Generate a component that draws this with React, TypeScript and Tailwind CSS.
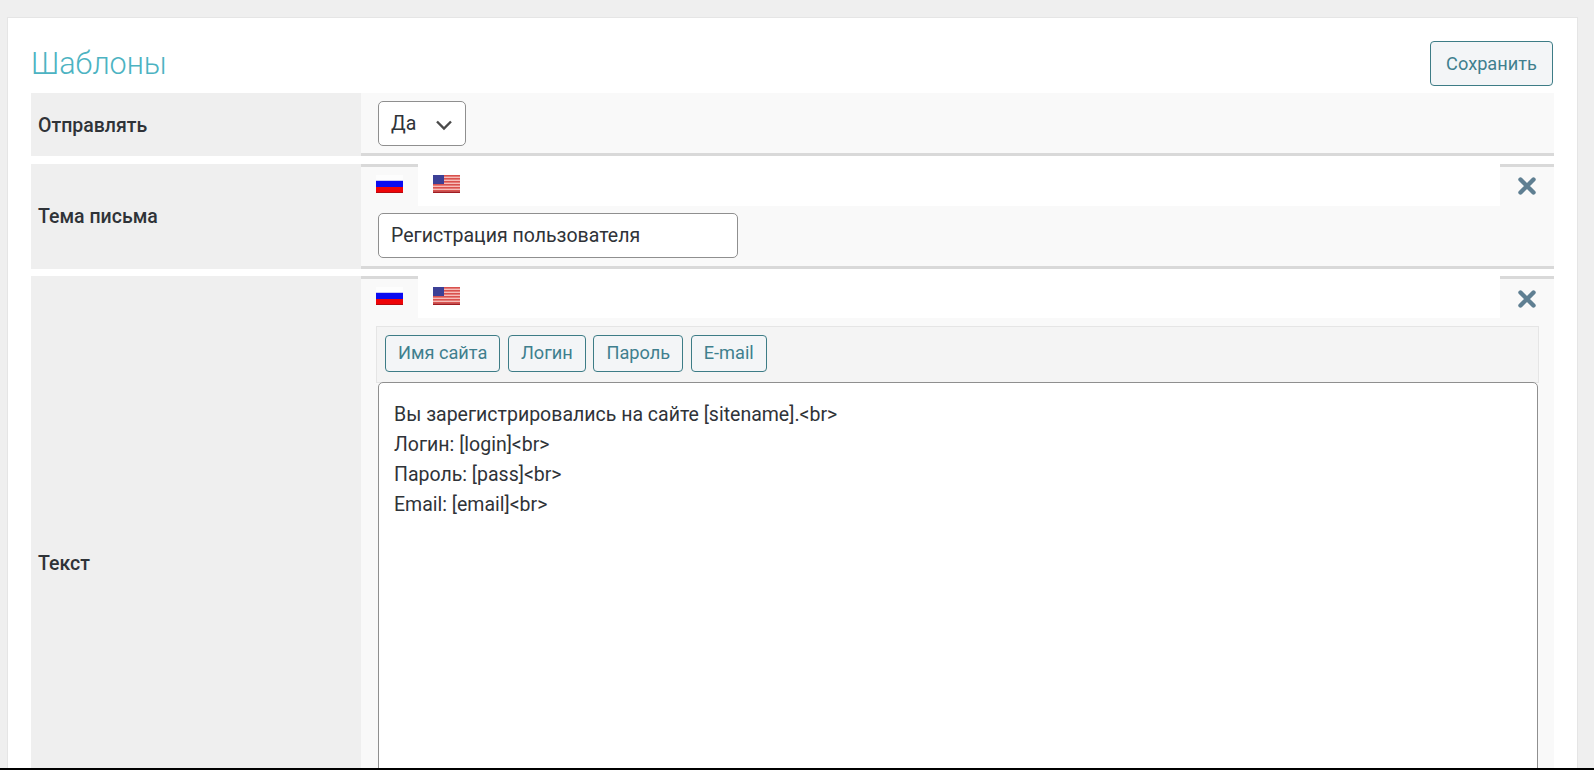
const font = { fontFamily: 'Roboto, sans-serif' };

function FlagRu() {
  return (
    <svg width="27" height="18" viewBox="0 0 27 18" className="block shrink-0">
      <rect width="27" height="6" fill="#fdfdfd" />
      <rect y="5" width="27" height="1" fill="#c8c8f4" />
      <rect y="6" width="27" height="6" fill="#0b0bf0" />
      <rect y="12" width="27" height="6" fill="#ee0408" />
      <rect y="17" width="27" height="1" fill="#b40a10" />
    </svg>
  );
}

function FlagUs() {
  const stripes = [0, 3, 6, 9, 12, 15];
  return (
    <div className="h-[18px] w-[27px] shrink-0 overflow-hidden">
      <svg width="27" height="18" viewBox="0 0 27 18" className="block blur-[0.4px]">
        <rect width="27" height="18" fill="#f6bdb9" />
        {stripes.map((y) => (
          <rect key={y} y={y} width="27" height="1.6" fill="#d9524e" />
        ))}
        <rect y="16.5" width="27" height="1.5" fill="#a01c22" />
        <rect width="11" height="9" fill="#3c4096" />
      </svg>
    </div>
  );
}

function CloseIcon() {
  return (
    <svg width="18" height="18" viewBox="0 0 18 18" className="block">
      <path d="M2.5 2.5 L15.5 15.5 M15.5 2.5 L2.5 15.5" stroke="#5f7f92" strokeWidth="4.4" strokeLinecap="round" fill="none" />
    </svg>
  );
}

function Tabs({ closeLow }: { closeLow?: boolean }) {
  return (
    <div className="flex h-[42px]">
      <div className="w-[57px] border-t-[3px] border-[#d9d9d9] bg-[#f9f9f9] pl-[15px] pt-2">
        <FlagRu />
      </div>
      <div className="flex-1 bg-white pl-[15px] pt-[11px]">
        <FlagUs />
      </div>
      <div className={closeLow ? 'flex w-[54px] justify-center border-t-[3px] border-[#d9d9d9] bg-[#f9f9f9] pt-[11px]' : 'flex w-[54px] justify-center border-t-[3px] border-[#d9d9d9] bg-[#f9f9f9] pt-[10px]'}>
        <CloseIcon />
      </div>
    </div>
  );
}

function Label({ children, low }: { children: string; low?: boolean }) {
  return (
    <div className={low ? 'flex w-[330px] shrink-0 items-center bg-[#efefef] pl-[7px] pt-[2px] text-[19.5px] font-medium text-[#2f3338]' : 'flex w-[330px] shrink-0 items-center bg-[#efefef] pl-[7px] text-[19.5px] font-medium text-[#2f3338]'}>
      {children}
    </div>
  );
}

function ToolButton({ children }: { children: string }) {
  return (
    <button className="h-[37px] rounded-[4px] border border-[#3d7c86] bg-[#f3f5f7] px-[12px] pb-[1px] text-[18.2px] text-[#3f7f8e]">
      {children}
    </button>
  );
}

export default function App() {
  return (
    <div className="flex h-[770px] w-[1594px] flex-col overflow-hidden bg-[#efefef]" style={font}>
      <div className="min-h-0 flex-1 overflow-hidden pl-[7px] pr-[16px] pt-[17px]">
        <div className="border border-[#e5e5e5] bg-white px-[23px]">
          <div className="flex h-[75px] items-start justify-between">
            <h1 className="pt-[27px] text-[30.5px] leading-[38px] font-light text-[#4cb3c2]">Шаблоны</h1>
            <button className="mr-[1px] mt-[23px] h-[45px] w-[123px] rounded-[4px] border border-[#3d7c86] bg-[#f3f5f7] text-[18.2px] text-[#3f7f8e]">
              Сохранить
            </button>
          </div>

          <div className="mb-2 flex h-[63px]">
            <Label low>Отправлять</Label>
            <div className="flex-1 border-b-[3px] border-[#d9d9d9] bg-[#f9f9f9] pl-[17px] pt-2">
              <div className="flex h-[45px] w-[88px] items-center justify-between rounded-[5px] border border-[#8f8f8f] bg-white pl-[12px] pr-[12px] text-[19.5px] text-[#2f3338]">
                <span>Да</span>
                <svg width="18" height="18" viewBox="0 0 18 18" fill="none" stroke="#4a4a4a" strokeWidth="2.4" className="mt-[2px]">
                  <path d="M2 5.5 L9 12.5 L16 5.5" />
                </svg>
              </div>
            </div>
          </div>

          <div className="mb-[7px] flex h-[105px]">
            <Label>Тема письма</Label>
            <div className="flex-1 border-b-[3px] border-[#d9d9d9] bg-[#f9f9f9]">
              <Tabs />
              <div className="pl-[17px] pt-[7px]">
                <input
                  readOnly
                  value="Регистрация пользователя"
                  className="block h-[45px] w-[360px] rounded-[5px] border border-[#8f8f8f] bg-white px-[12px] text-[19.5px] text-[#2f3338] outline-none"
                />
              </div>
            </div>
          </div>

          <div className="flex h-[574px]">
            <Label low>Текст</Label>
            <div className="flex-1 bg-[#f9f9f9]">
              <Tabs closeLow />
              <div className="px-[15px] pt-2">
                <div className="flex h-[57px] gap-[7.6px] border border-[#e5e5e5] bg-[#f4f4f4] pl-2 pt-2">
                  <ToolButton>Имя сайта</ToolButton>
                  <ToolButton>Логин</ToolButton>
                  <ToolButton>Пароль</ToolButton>
                  <ToolButton>E-mail</ToolButton>
                </div>
                <textarea
                  readOnly
                  defaultValue={'Вы зарегистрировались на сайте [sitename].<br>\nЛогин: [login]<br>\nПароль: [pass]<br>\nEmail: [email]<br>'}
                  className="-mt-px ml-[2px] mr-[1px] block h-[460px] w-[1160px] resize-none overflow-hidden rounded-[5px] border border-[#8f8f8f] bg-white px-[15px] pb-[15px] pt-[17px] text-[19.5px] leading-[30px] text-[#2f3338] outline-none"
                />
              </div>
            </div>
          </div>
        </div>
      </div>
      <div className="h-[2px] shrink-0 bg-black" />
    </div>
  );
}
